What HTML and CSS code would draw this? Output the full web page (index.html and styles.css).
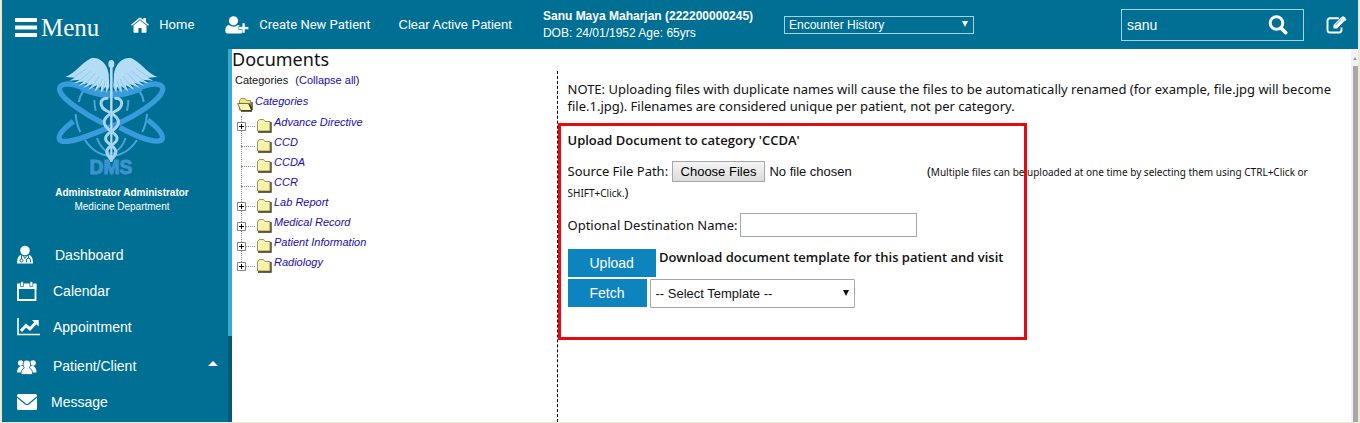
FILE: index.html
```html
<!DOCTYPE html>
<html lang="en">
<head>
<meta charset="utf-8">
<title>Documents</title>
<link rel="stylesheet" href="styles.css">
</head>
<body>
<svg class="defs" aria-hidden="true">
  <symbol id="folder" viewBox="0 0 16 15">
    <path d="M1.500 13V3.500l2-2h4l1.500 2h5v9.500z" fill="#f8f2a0" stroke="#98934c"/>
    <path d="M2 14h13V4" fill="none" stroke="#33321c" stroke-width="1.300"/>
    <path d="M2.500 12V4.500h10.500" fill="none" stroke="#fffde0"/>
  </symbol>
  <symbol id="folder-open" viewBox="0 0 16 15">
    <path d="M2.500 13V3.500l1.500-2h4l1.500 2h4v9.500z" fill="#ece58c" stroke="#98934c"/>
    <path d="M.7 6.500h11l3 7h-11z" fill="#fbf6b4" stroke="#77733c"/>
    <path d="M12 6.500l3 6.500V5M4 14h11" fill="none" stroke="#33321c" stroke-width="1.300"/>
  </symbol>
  <symbol id="plus" viewBox="0 0 9 9">
    <path d="M.5.500h8v8h-8z" fill="#fff" stroke="#848484"/>
    <path d="M2 4.500h5M4.500 2v5" stroke="#000"/>
  </symbol>
</svg>

<header class="topbar">
  <button class="menu" type="button">
    <svg width="22" height="19" viewBox="0 0 22 19"><path d="M1 2h20M1 9.500h20M1 17h20" stroke="#fff" stroke-width="4" stroke-linecap="round"/></svg>Menu
  </button>
  <a class="nav-home" href="#"><svg width="18" height="16" viewBox="0 0 18 16" fill="#fff"><path d="M9 3.200 15.500 8.600V15q0 .7-.7.7h-4.200V11H7.400v4.700H3.200q-.7 0-.7-.7V8.600z"/><path d="M0 7.700 8 1q1-.8 2 0l2.400 2V1h2.600v4.200l3 2.500-.9 1L9 2.200.9 8.700z"/></svg>Home</a>
  <a class="nav-create" href="#"><svg width="24" height="18" viewBox="0 0 24 18" fill="#fff"><circle cx="8.500" cy="4.800" r="4.600"/><path d="M4 9q4.500 3.300 9 0 1 0 2 1h-1v3.500h3.500v3q-.5 1-2 1H2.500Q.3 17.500.3 15 .3 9.500 4 9z"/><path d="M17.200 7h2.800V10.700h3.600v2.800H20V17h-2.800v-3.500h-3.600v-2.800h3.600z" stroke="#006f94" stroke-width=".5"/></svg>Create New Patient</a>
  <a class="nav-clear" href="#">Clear Active Patient</a>
  <div class="patient"><strong>Sanu Maya Maharjan (222200000245)</strong><span>DOB: 24/01/1952 Age: 65yrs</span></div>
  <div class="picker encounter">
    <select aria-label="Encounter History"><option>Encounter History</option></select>
  </div>
  <form class="search">
    <input type="text" value="sanu" aria-label="Search">
    <button type="button" aria-label="Search"><svg width="20" height="20" viewBox="0 0 20 20" fill="none" stroke="#fff"><circle cx="8.500" cy="8" r="6.300" stroke-width="3"/><path d="m13 13 4.700 4.700" stroke-width="3.600" stroke-linecap="round"/></svg></button>
  </form>
  <button class="edit" type="button" aria-label="Edit"><svg width="21" height="18" viewBox="0 0 21 18"><path d="M13 2.300H4Q1.500 2.300 1.500 5v9Q1.500 16.500 4 16.500h9q2.500 0 2.500-2.500v-2.500" fill="none" stroke="#fff" stroke-width="1.900"/><path d="M7.500 9 15 1.500l3.500 3.500-7.500 7.500H7.500zM16 .8q1-1.200 2.200 0l1.600 1.600q1 1 0 2L19 5.300 15.200 1.500z" fill="#fff"/><path d="m9.500 9 5.500-5.500" stroke="#006f94" stroke-width=".7"/></svg></button>
</header>

<div class="body">
  <nav class="sidebar">
    <svg class="logo" width="112" height="124" viewBox="46 18 336 372" role="img" aria-label="DMS">
      <g fill="none" stroke="#4aa3df" stroke-width="6">
        <path d="M132 122q-12 16-14 34M108 192q2 30 14 54M298 122q12 16 14 34M322 192q-2 30-14 54M164 150q0 16 4 32M266 150q0 16-4 32M136 270q30 46 78 48 48-2 78-48M172 264q12 34 40 48M258 264q-12 34-40 48"/>
      </g>
      <g fill="none" stroke="#379bdc" stroke-width="16">
        <path d="M126 112q88 42 178 0" stroke-width="22"/>
        <path d="M140 118C90 94 52 98 61 124c8 24 74 68 130 96"/>
        <path d="M290 118c50-24 86-20 78 6-8 26-76 72-136 98C150 258 66 290 59 266c-4-14 18-34 42-52"/>
        <path d="M240 232c66 36 124 54 128 32 2-14-18-34-44-54"/>
      </g>
      <text x="214" y="372" text-anchor="middle" class="logo-name">DMS</text>
      <g fill="#b4ddf5">
        <path id="wing" d="M207 72C202 38 178 20 154 25 126 38 108 70 77 81l29 2-17 9 31-3-19 12 32-7-18 14 31-10-16 16 29-12-13 18 26-15-8 20 21-17-2 20 15-18 2 19 9-19z"/>
        <use href="#wing" transform="matrix(-1 0 0 1 430 0)"/>
        <ellipse cx="215" cy="42" rx="9" ry="12"/>
        <path d="M211 52h8l-1 284h-6z"/>
      </g>
      <g fill="none" stroke="#a5d5f2" stroke-width="9" stroke-linecap="round">
        <path d="M202 145c-26 0-22 28 0 38 46 22 42 42 12 62-24 16-20 28 2 42 18 14 16 26-2 42"/>
        <path d="M228 145c26 0 22 28 0 38-46 22-42 42-12 62 24 16 20 28-2 42-18 14-16 26 2 42"/>
      </g>
      <path d="m140 56-38 26m51-18-34 28m48-22-30 31m42-22-23 32m33-24-16 33m24-28-8 34M290 56l38 26m-51-18 34 28m-48-22 30 31m-42-22 23 32m-33-24 16 33m-24-28 8 34" stroke="#85bedd" stroke-width="2"/>
    </svg>
    <strong class="user">Administrator Administrator</strong>
    <span class="dept">Medicine Department</span>
    <ul class="links">
      <li><a href="#"><svg width="23" height="20" viewBox="0 0 23 20"><circle cx="8" cy="5.500" r="4.800" fill="#fff"/><path d="M3.500 10q4.500 3 9 0Q16 11 16 18.500H0Q0 11 3.500 10z" fill="#fff"/><path d="M4.500 10.500v4m7-4.300v3m-2 4v-2q0-2 2-2t2 2v2M6.500 11.500l1.500 2 1.500-2" fill="none" stroke="#006f94"/><circle cx="4.500" cy="15.500" r="1.500" fill="#fff" stroke="#006f94"/></svg><span class="wide">Dashboard</span></a></li>
      <li><a href="#"><svg width="23" height="20" viewBox="0 0 23 20"><path d="M1 3.500h17.500V19H1z" fill="none" stroke="#fff" stroke-width="1.800"/><path d="M0 3h19.400v5H0z" fill="#fff"/><path d="M3.500 1.500q1.500-2 3 0v4h-3zM12.800 1.500q1.500-2 3 0v4h-3z" fill="#fff" stroke="#006f94" stroke-width=".7"/></svg>Calendar</a></li>
      <li><a href="#"><svg width="23" height="20" viewBox="0 0 23 20" fill="none" stroke="#fff"><path d="M1 1v16.500h22" stroke-width="1.600"/><path d="m4 14 5-5.500 4 3.500 6-6.500" stroke-width="3"/><path d="M15 3h6.700v6.500z" fill="#fff" stroke="none"/></svg>Appointment</a></li>
      <li class="grouped"><a href="#"><svg width="23" height="20" viewBox="0 0 23 20" fill="#fff"><circle cx="3.700" cy="7" r="2.800"/><circle cx="16" cy="7" r="2.800"/><path d="M0 16.500q0-5 3.700-6.500h12.600q3.200 1.500 3.200 6.500z"/><path d="M4 18.500q0-5.500 3.300-6.500-1.300-2-1.300-4Q6 4 9.800 4t3.800 4q0 2-1.300 4 3.300 1 3.300 6.500z" stroke="#006f94" stroke-width=".8"/></svg>Patient/Client<i class="caret"></i></a></li>
      <li><a href="#"><svg width="21" height="20" viewBox="0 0 21 20"><rect y="2" width="20" height="16" rx="1.500" fill="#fff"/><path d="m0 5 8.500 7q1.500 1 3 0L20 5" fill="none" stroke="#006f94" stroke-width="1.200"/></svg>Message</a></li>
    </ul>
  </nav>
  <div class="side-scroll"></div>

  <main class="documents">
    <section class="categories">
      <h1>Documents</h1>
      <p class="tree-head">Categories <span>(<a href="#">Collapse all</a>)</span></p>
      <a class="root" href="#"><svg width="16" height="15"><use href="#folder-open"/></svg><span>Categories</span></a>
      <ul class="tree">
        <li><svg class="plus" width="9" height="9"><use href="#plus"/></svg><a href="#"><svg width="16" height="15"><use href="#folder"/></svg><span>Advance Directive</span></a></li>
        <li><a href="#"><svg width="16" height="15"><use href="#folder"/></svg><span>CCD</span></a></li>
        <li><a href="#"><svg width="16" height="15"><use href="#folder"/></svg><span>CCDA</span></a></li>
        <li><a href="#"><svg width="16" height="15"><use href="#folder"/></svg><span>CCR</span></a></li>
        <li><svg class="plus" width="9" height="9"><use href="#plus"/></svg><a href="#"><svg width="16" height="15"><use href="#folder"/></svg><span>Lab Report</span></a></li>
        <li><svg class="plus" width="9" height="9"><use href="#plus"/></svg><a href="#"><svg width="16" height="15"><use href="#folder"/></svg><span>Medical Record</span></a></li>
        <li><svg class="plus" width="9" height="9"><use href="#plus"/></svg><a href="#"><svg width="16" height="15"><use href="#folder"/></svg><span>Patient Information</span></a></li>
        <li><svg class="plus" width="9" height="9"><use href="#plus"/></svg><a href="#"><svg width="16" height="15"><use href="#folder"/></svg><span>Radiology</span></a></li>
      </ul>
    </section>

    <section class="upload">
      <p class="note">NOTE: Uploading files with duplicate names will cause the files to be automatically renamed (for example, file.jpg will become file.1.jpg). Filenames are considered unique per patient, not per category.</p>
      <form class="upload-form">
        <h2>Upload Document to category 'CCDA'</h2>
        <div class="source"><label for="file">Source File Path:</label> <input id="file" type="file" multiple> <span>(<small>Multiple files can be uploaded at one time by selecting them using CTRL+Click or</small></span> <span><small>SHIFT+Click.</small>)</span></div>
        <div class="dest"><label for="dest">Optional Destination Name:</label><input id="dest" type="text"></div>
        <div class="row"><button class="action" type="button">Upload</button><h2>Download document template for this patient and visit</h2></div>
        <div class="row"><button class="action" type="button">Fetch</button>
          <div class="picker template"><select aria-label="Template"><option>-- Select Template --</option></select></div>
        </div>
        <div class="highlight"></div>
      </form>
    </section>
  </main>
  <div class="page-scroll"><i class="up"></i><div class="thumb"></div></div>
</div>
</body>
</html>
```
FILE: styles.css
```css
* { box-sizing: border-box; }

body {
  margin: 0;
  height: 100vh;
  display: flex;
  flex-direction: column;
  border: solid #ece9d8;
  border-width: 0 2px 1px;
  background: #fff;
  color: #111;
  font-family: "Liberation Sans", Arial, sans-serif;
  overflow: hidden;
}

h1, h2, p, ul { margin: 0; padding: 0; }
ul { list-style: none; }
a { text-decoration: none; }
svg { flex: none; }
button, input, select { font-family: inherit; margin: 0; }
.defs { position: absolute; width: 0; height: 0; }

/* Top bar */
.topbar {
  flex: none;
  height: 49px;
  display: flex;
  align-items: center;
  padding: 0 11px 0 13px;
  background: #006f94;
  color: #fff;
  font-size: 13px;
}
.topbar a { display: flex; align-items: center; color: #fff; white-space: nowrap; }
.topbar button { padding: 0; border: 0; background: none; color: #fff; display: flex; }
.topbar .menu {
  align-items: center;
  gap: 4px;
  margin-top: 6px;
  font: 25px/28px "Liberation Serif", "Times New Roman", serif;
}
.topbar .nav-home { margin-left: 32px; gap: 10px; font-family: Roboto, sans-serif; }
.topbar .nav-create { margin-left: 31px; gap: 10px; font-family: Roboto, sans-serif; }
.topbar .nav-clear { margin-left: 28px; }
.patient {
  margin-left: 31px;
  width: 241px;
  display: flex;
  flex-direction: column;
  font-size: 12px;
  line-height: 17px;
  white-space: nowrap;
}

.picker { position: relative; display: flex; }
.picker select {
  appearance: none;
  width: 100%;
  margin: 0;
  border: 1px solid;
  background: none;
  color: inherit;
}
.picker::after {
  content: "";
  position: absolute;
  right: 6px;
  top: 50%;
  margin-top: -4px;
  border: solid transparent;
  border-width: 6px 3px 0;
  border-top-color: currentColor;
  pointer-events: none;
}
.encounter { width: 190px; }
.encounter select { height: 18px; padding: 0 4px; border-color: #a9d0de; font-size: 12px; }

.search {
  display: flex;
  align-items: center;
  width: 183px;
  height: 32px;
  margin-left: auto;
  padding: 0 15px 0 5px;
  border: 1px solid #a9d0de;
}
.search input {
  flex: 1;
  min-width: 0;
  padding: 0;
  border: 0;
  outline: 0;
  background: none;
  color: #fff;
  font-size: 14px;
}
.topbar .edit { margin-left: 22px; }

/* Sidebar */
.body { flex: 1; min-height: 0; display: flex; }
.sidebar {
  flex: none;
  width: 226px;
  display: flex;
  flex-direction: column;
  background: #006f94;
  color: #fff;
}
.logo { margin: 7px 0 0 53px; }
.logo-name {
  font: bold 58px "Liberation Sans", Arial, sans-serif;
  fill: #3b93cf;
  stroke: #3b93cf;
  stroke-width: 3px;
}
.user, .dept { width: 240px; text-align: center; font-size: 10px; line-height: 14px; }
.user { margin-top: 6px; }
.links { margin-top: 23px; }
.links a {
  display: flex;
  align-items: center;
  gap: 13px;
  height: 36px;
  padding: 0 10px 0 15px;
  color: #fff;
  font-size: 14px;
}
.links .grouped a { height: 39px; padding-top: 3px; }
.links .wide { padding-left: 2px; }
.caret {
  margin-left: auto;
  margin-bottom: 6px;
  border: solid transparent;
  border-width: 0 5px 5px;
  border-bottom-color: #fff;
}
.side-scroll {
  flex: none;
  width: 4px;
  background: linear-gradient(#38a9d3 77%, #00597d 77%);
}

/* Document tree */
.documents { flex: 1; min-width: 0; display: flex; }
.categories { flex: 0 0 29%; font-size: 11px; }
.categories h1 { font: 18px/21px "Noto Sans", sans-serif; }
.categories a { color: #1a0dab; }
.tree-head { padding-left: 3px; line-height: 20px; }
.tree-head span { margin-left: 4px; }
.root, .tree a { display: flex; gap: 2px; font-style: italic; line-height: 20px; }
.root { margin: 1px 0 0 5px; }
.root svg, .tree a svg { margin-top: 6px; }
.tree { position: relative; margin-left: 9px; }
.tree::before {
  content: "";
  position: absolute;
  left: 0;
  top: 4px;
  bottom: 4px;
  border-left: 1px dotted #888;
}
.tree li { position: relative; height: 20px; padding-left: 15px; }
.tree li::before {
  content: "";
  position: absolute;
  left: 0;
  top: 14px;
  width: 14px;
  border-top: 1px dotted #888;
}
.plus { position: absolute; left: -4px; top: 10px; }

/* Upload panel */
.upload {
  flex: 1;
  min-width: 0;
  margin-top: 22px;
  border-left: 1px dashed #000;
  font: 13px/17px "Noto Sans", sans-serif;
}
.note { padding: 10px 18px 0 10px; }
.upload-form { position: relative; margin-top: 8px; padding: 9px 20px 0 10px; }
.upload h2 { font: 600 13px/17px "Open Sans", "Noto Sans", sans-serif; }
.source { margin-top: 12px; line-height: 20px; }
.source small { font-size: 10px; }
.source input { width: 252px; font: 13px "Liberation Sans", Arial, sans-serif; }
.source input::file-selector-button {
  height: 21px;
  margin-right: 4px;
  padding: 0 8px;
  border: 1px solid #a6a6a6;
  background: linear-gradient(#f4f4f4, #dcdcdc);
  font: 13px "Liberation Sans", Arial, sans-serif;
}
.dest { display: flex; align-items: center; gap: 2px; margin: 10px 0 12px; }
.dest input { width: 177px; height: 24px; border: 1px solid #a6a6a6; }
.row { display: flex; gap: 3px; margin-bottom: 2px; }
.action {
  height: 28px;
  padding: 0 22px;
  border: 0;
  background: #0e84bf;
  color: #fff;
  font: 14px "Liberation Sans", Arial, sans-serif;
}
.template { width: 205px; }
.template select {
  height: 29px;
  padding: 0 5px;
  border-color: #a6a6a6;
  border-radius: 1px;
  font: 13px "Liberation Sans", Arial, sans-serif;
}
.highlight {
  position: absolute;
  inset: 0 auto auto 0;
  width: 469px;
  height: 217px;
  border: 3px solid #e30b12;
  pointer-events: none;
}

/* Page scrollbar */
.page-scroll { flex: none; width: 7px; padding-left: 2px; background: #f1f1f1; }
.up {
  display: block;
  width: 0;
  margin: 8px 0 0;
  border: solid transparent;
  border-width: 0 2px 3px;
  border-bottom-color: #999;
}
.thumb { height: 100%; margin-top: 6px; background: #a8a8a8; }
```
